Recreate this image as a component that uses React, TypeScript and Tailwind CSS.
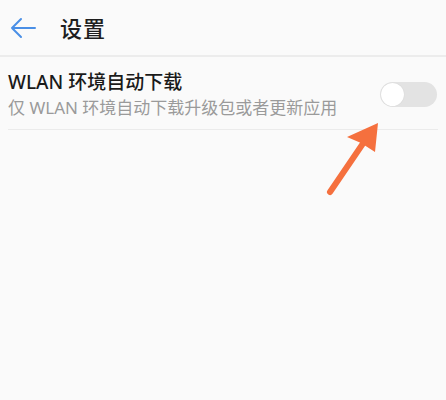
import React from "react"

export default function App() {
  return (
    <div
      className="relative w-[446px] h-[400px] overflow-hidden bg-[#fafafa]"
      style={{ fontFamily: '"Noto Sans", "Noto Sans CJK SC", sans-serif' }}
    >
      {/* header */}
      <div className="flex items-center h-[57px] border-b-2 border-[#ececec]">
        <button className="ml-[10px] w-[26px] h-[26px] flex items-center justify-center">
          <svg width="26" height="22" viewBox="0 0 26 22" fill="none">
            <path d="M25 11H2M11 2L2 11l9 9" stroke="#4a8fe6" strokeWidth="2" strokeLinecap="round" strokeLinejoin="round" />
          </svg>
        </button>
        <div className="ml-[24px] text-[22px] font-medium text-[#1e1e1e] leading-none tracking-[1px]">设置</div>
      </div>

      {/* wlan row */}
      <div className="mx-[8px] flex items-center border-b border-[#ebebeb] pt-[12px] pb-[9px]">
        <div className="flex-1">
          <div className="text-[19px] font-medium leading-[26px] text-[#1a1a1a]">WLAN 环境自动下载</div>
          <div className="text-[17px] leading-[24px] text-[#9a9a9a] mt-[1px]">仅 WLAN 环境自动下载升级包或者更新应用</div>
        </div>
        <div className="w-[57px] h-[25px] rounded-full bg-[#e3e3e3] flex items-center px-[1px] mr-[1px]">
          <div className="w-[23px] h-[23px] rounded-full bg-white shadow-[0_0_1px_rgba(0,0,0,0.15)]" />
        </div>
      </div>

      {/* annotation arrow */}
      <svg className="absolute left-0 top-0" width="446" height="400" viewBox="0 0 446 400">
        <path d="M330 192L364 142" stroke="#f5703e" strokeWidth="6" strokeLinecap="round" />
        <path d="M378 123L347 137L361 143L375 152Z" fill="#f5703e" />
      </svg>
    </div>
  )
}
